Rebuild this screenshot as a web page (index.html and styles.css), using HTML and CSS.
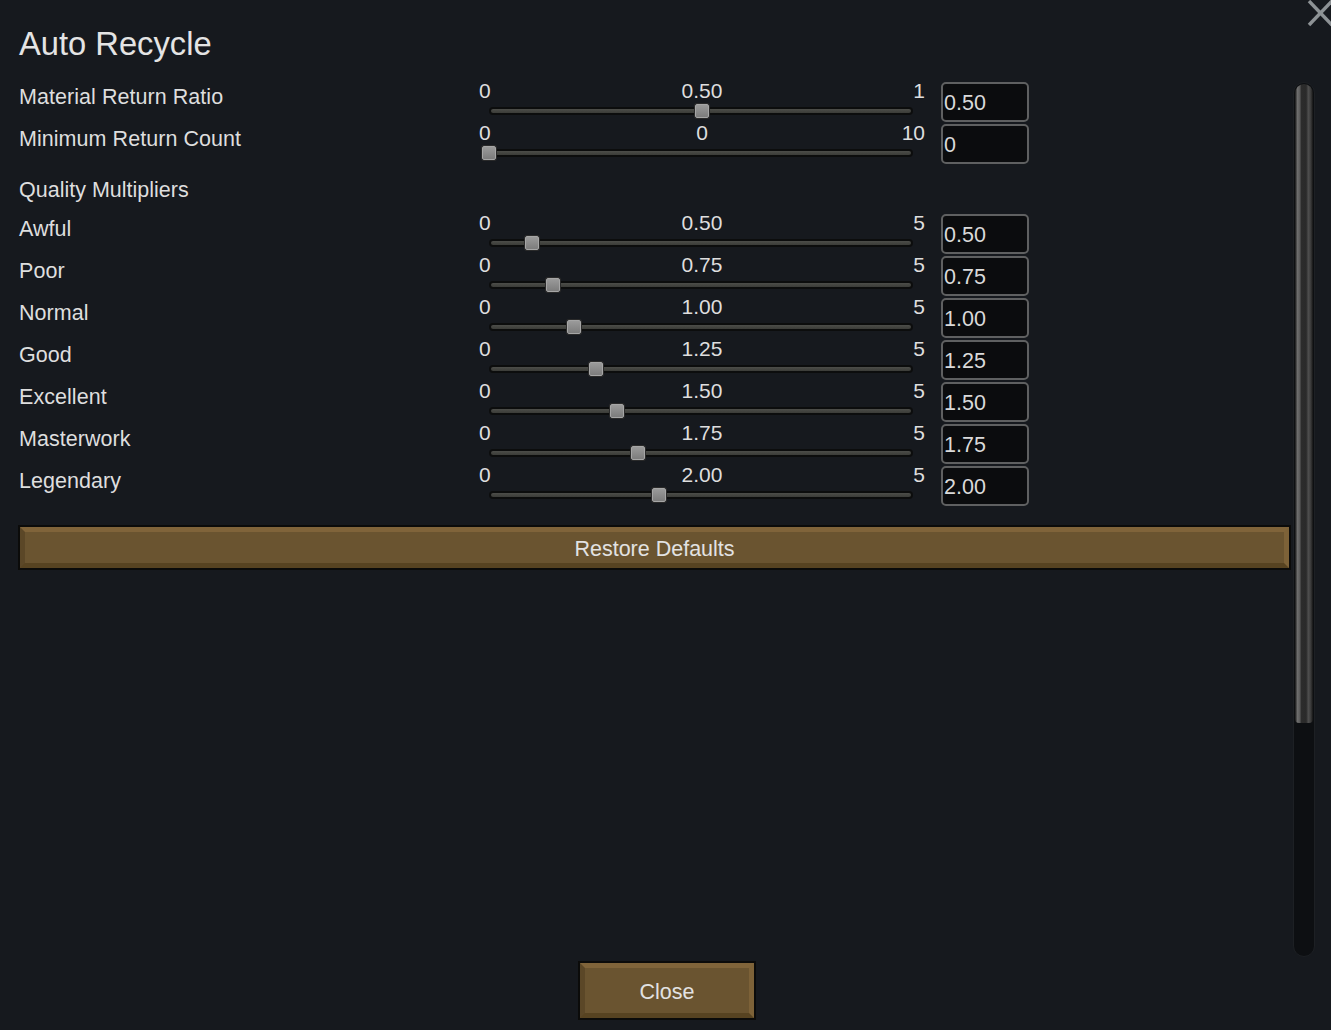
FILE: index.html
```html
<!DOCTYPE html>
<html lang="en">
<head>
<meta charset="utf-8">
<title>Auto Recycle</title>
<link rel="stylesheet" href="styles.css">
</head>
<body>
<div class="window">
  <svg class="close-x" width="26" height="28" viewBox="0 0 26 28" aria-hidden="true">
    <line x1="2" y1="1" x2="25" y2="25" />
    <line x1="25" y1="1" x2="2" y2="25" />
  </svg>

  <div class="main">
    <div class="content">
      <h1 class="title">Auto Recycle</h1>

      <div class="row">
        <div class="label">Material Return Ratio</div>
        <div class="slider">
          <div class="scale"><span class="min">0</span><span class="value">0.50</span><span class="max">1</span></div>
          <div class="track"><div class="lane"><div class="thumb" style="left:50%"></div></div></div>
        </div>
        <div class="field">0.50</div>
      </div>

      <div class="row">
        <div class="label">Minimum Return Count</div>
        <div class="slider">
          <div class="scale"><span class="min">0</span><span class="value">0</span><span class="max">10</span></div>
          <div class="track"><div class="lane"><div class="thumb" style="left:0%"></div></div></div>
        </div>
        <div class="field">0</div>
      </div>

      <div class="section">Quality Multipliers</div>

      <div class="row">
        <div class="label">Awful</div>
        <div class="slider">
          <div class="scale"><span class="min">0</span><span class="value">0.50</span><span class="max">5</span></div>
          <div class="track"><div class="lane"><div class="thumb" style="left:10%"></div></div></div>
        </div>
        <div class="field">0.50</div>
      </div>

      <div class="row">
        <div class="label">Poor</div>
        <div class="slider">
          <div class="scale"><span class="min">0</span><span class="value">0.75</span><span class="max">5</span></div>
          <div class="track"><div class="lane"><div class="thumb" style="left:15%"></div></div></div>
        </div>
        <div class="field">0.75</div>
      </div>

      <div class="row">
        <div class="label">Normal</div>
        <div class="slider">
          <div class="scale"><span class="min">0</span><span class="value">1.00</span><span class="max">5</span></div>
          <div class="track"><div class="lane"><div class="thumb" style="left:20%"></div></div></div>
        </div>
        <div class="field">1.00</div>
      </div>

      <div class="row">
        <div class="label">Good</div>
        <div class="slider">
          <div class="scale"><span class="min">0</span><span class="value">1.25</span><span class="max">5</span></div>
          <div class="track"><div class="lane"><div class="thumb" style="left:25%"></div></div></div>
        </div>
        <div class="field">1.25</div>
      </div>

      <div class="row">
        <div class="label">Excellent</div>
        <div class="slider">
          <div class="scale"><span class="min">0</span><span class="value">1.50</span><span class="max">5</span></div>
          <div class="track"><div class="lane"><div class="thumb" style="left:30%"></div></div></div>
        </div>
        <div class="field">1.50</div>
      </div>

      <div class="row">
        <div class="label">Masterwork</div>
        <div class="slider">
          <div class="scale"><span class="min">0</span><span class="value">1.75</span><span class="max">5</span></div>
          <div class="track"><div class="lane"><div class="thumb" style="left:35%"></div></div></div>
        </div>
        <div class="field">1.75</div>
      </div>

      <div class="row">
        <div class="label">Legendary</div>
        <div class="slider">
          <div class="scale"><span class="min">0</span><span class="value">2.00</span><span class="max">5</span></div>
          <div class="track"><div class="lane"><div class="thumb" style="left:40%"></div></div></div>
        </div>
        <div class="field">2.00</div>
      </div>

      <button class="btn restore" type="button">Restore Defaults</button>
    </div>

    <div class="scrollbar"><div class="scroll-thumb"></div></div>
  </div>

  <div class="footer">
    <button class="btn close" type="button">Close</button>
  </div>
</div>
</body>
</html>
```

FILE: styles.css
```css
html, body {
  margin: 0;
  padding: 0;
  background: #16191e;
}

body {
  font-family: "Liberation Sans", Arial, sans-serif;
  color: #dedede;
  font-size: 21.5px;
}

.window {
  position: relative;
  width: 1331px;
  height: 1030px;
  display: flex;
  flex-direction: column;
  overflow: hidden;
}

/* window close cross, top right corner */
.close-x {
  position: absolute;
  left: 1307px;
  top: 0;
}
.close-x line {
  stroke: #8d9295;
  stroke-width: 3.4;
}

.main {
  display: flex;
  height: 957px;
}

.content {
  width: 1271px;
  padding-left: 19px;
}

.title {
  margin: 24px 0 18px;
  height: 40px;
  line-height: 40px;
  font-size: 32.7px;
  font-weight: normal;
  color: #e4e4e4;
}

.row {
  display: flex;
  height: 42px;
}

.label {
  width: 460px;
  line-height: 30px;
  white-space: nowrap;
  letter-spacing: 0.05px;
}

.section {
  height: 48px;
  line-height: 48px;
}

.slider {
  width: 446px;
}

/* min / current / max labels above the rail */
.scale {
  display: grid;
  grid-template-columns: 1fr auto 1fr;
  height: 18px;
  line-height: 18px;
  font-size: 21px;
}
.scale .min { justify-self: start; }
.scale .value { justify-self: center; }
.scale .max { justify-self: end; }

.track {
  position: relative;
  margin: 7px 0 0 10px;
  width: 424px;
  height: 8px;
  box-sizing: border-box;
  border: 2px solid #0c0d0d;
  border-radius: 4px;
  background: linear-gradient(#4c4d49, #3b3c38);
}

/* travel range of the handle centre */
.lane {
  position: absolute;
  left: -2px;
  top: 0;
  width: 426px;
  height: 4px;
}

.thumb {
  position: absolute;
  top: -5px;
  width: 14px;
  height: 14px;
  margin-left: -7px;
  box-sizing: border-box;
  border: 1px solid #a6a6a6;
  border-radius: 2px;
  background: linear-gradient(#9a9a9a, #7c7c7c);
  box-shadow: 0 0 0 1px #2a2a2a;
}

.field {
  margin-left: 16px;
  width: 88px;
  height: 40px;
  box-sizing: border-box;
  border: 2px solid #5f6061;
  border-radius: 5px;
  background: #0b0c0e;
  padding: 0 0 0 1px;
  line-height: 38px;
  color: #dadada;
}

.btn {
  display: block;
  box-sizing: border-box;
  font-family: "Liberation Sans", Arial, sans-serif;
  font-size: 21.5px;
  color: #e2e2e2;
  background: #6a5430;
  border-style: solid;
  border-width: 5px;
  border-color: #80643a #7d6238 #574321 #5b4727;
  box-shadow: 0 0 0 2px #0b0b0a;
  padding: 4px 0 0;
  cursor: pointer;
}

.restore {
  margin: 19px 0 0 1px;
  width: 1269px;
  height: 41px;
}

.scrollbar {
  margin: 82px 0 0 3px;
  width: 22px;
  height: 875px;
  box-sizing: border-box;
  border: 1px solid #1d2024;
  border-radius: 11px;
  background: #0d0f12;
  padding: 1px 1px 0;
}

.scroll-thumb {
  height: 639px;
  border-radius: 9px 9px 4px 4px;
  background: linear-gradient(to right,
    #161616 0%, #6e6e6e 14%, #5c5c5c 26%, #2c2c2c 36%,
    #2a2a2a 62%, #4e4e4e 74%, #3a3a3a 88%, #141414 100%);
}

.footer {
  display: flex;
  justify-content: center;
  padding-left: 3px;
  padding-top: 6px;
}

.close {
  width: 174px;
  height: 55px;
}
```
